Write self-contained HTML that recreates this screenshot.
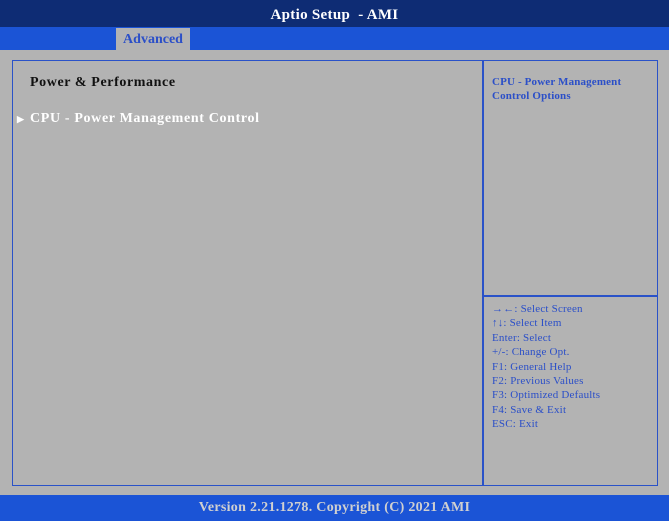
<!DOCTYPE html>
<html><head><style>
body{margin:0;width:669px;height:521px;background:#b3b3b3;position:relative;overflow:hidden;font-family:"Liberation Serif",serif;font-weight:bold}
div{position:absolute;box-sizing:border-box}
.t{white-space:nowrap}
</style></head><body>
<div style="left:0;top:0;width:669px;height:27px;background:#0e2c74;color:#fff;font-size:15px;text-align:center;line-height:30px;letter-spacing:0.3px">Aptio Setup &nbsp;- AMI</div>
<div style="left:0;top:27px;width:669px;height:23px;background:#1b54d6"></div>
<div style="left:116px;top:28px;width:74px;height:22px;background:#b3b3b3;color:#2b4fc8;font-size:14px;text-align:center;line-height:23px">Advanced</div>
<div style="left:12px;top:60px;width:646px;height:426px;border:1.5px solid #2a52c8"></div>
<div style="left:482px;top:60px;width:1.5px;height:426px;background:#2a52c8"></div>
<div style="left:482px;top:295px;width:176px;height:1.5px;background:#2a52c8"></div>
<div class="t" style="left:30px;top:75px;font-size:14px;color:#111;letter-spacing:0.6px">Power &amp; Performance</div>
<div class="t" style="left:17px;top:114px;font-size:9px;color:#fff">&#9654;</div>
<div class="t" style="left:30px;top:111px;font-size:14px;color:#fff;letter-spacing:0.65px">CPU - Power Management Control</div>
<div style="left:492px;top:75px;font-size:11px;color:#2b4fc8;line-height:14px;letter-spacing:0.15px">CPU - Power Management<br>Control Options</div>
<div style="left:492px;top:302px;font-size:11px;font-weight:normal;color:#2b4fc8;line-height:14.4px;letter-spacing:0.2px" class="t">→←: Select Screen<br>↑↓: Select Item<br>Enter: Select<br>+/-: Change Opt.<br>F1: General Help<br>F2: Previous Values<br>F3: Optimized Defaults<br>F4: Save &amp; Exit<br>ESC: Exit</div>
<div style="left:0;top:495px;width:669px;height:26px;background:#1b54d6;color:#d0d0d0;font-size:14px;text-align:center;line-height:26px;letter-spacing:0.3px">Version 2.21.1278. Copyright (C) 2021 AMI</div>
</body></html>
